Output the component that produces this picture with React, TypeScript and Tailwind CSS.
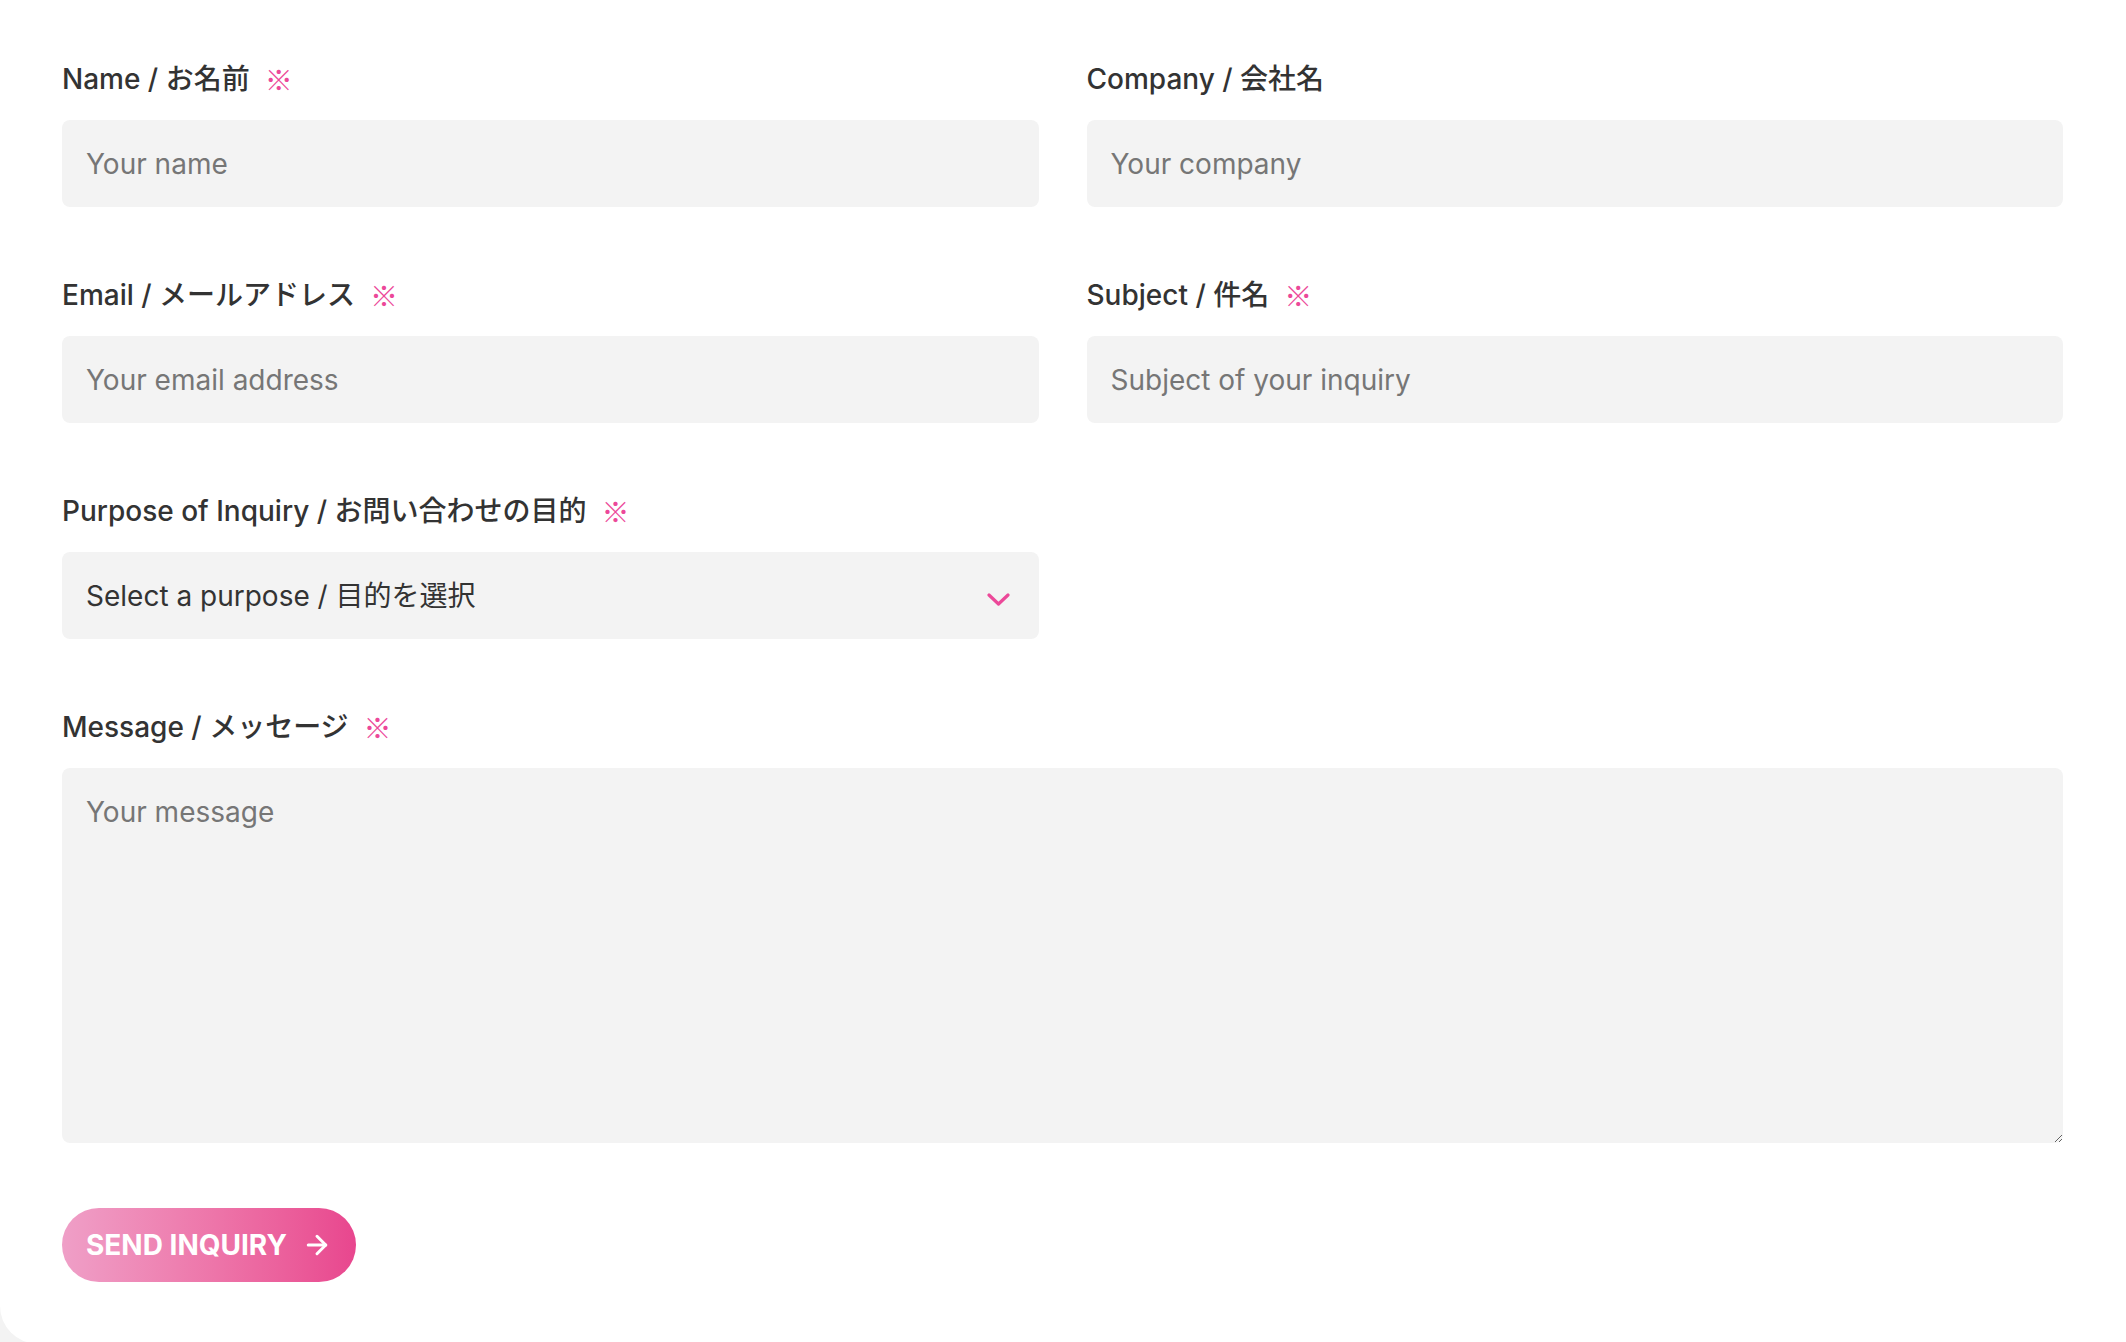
import React from 'react';
import { ArrowRight } from 'lucide-react';

const font = { fontFamily: 'Inter, "Noto Sans CJK JP", sans-serif' };

const Label: React.FC<{ text: string; required?: boolean }> = ({ text, required }) => (
  <label className="flex items-center h-[40px] text-[28px] leading-[40px] font-medium text-[#333333] mb-[21px]">
    <span>{text}</span>
    {required && (
      <span
        className="ml-[15px] text-[#ec4899] text-[28px] font-normal"
        style={{ fontFamily: '"Noto Sans CJK JP", sans-serif' }}
      >
        ※
      </span>
    )}
  </label>
);

const inputCls =
  'w-full h-[87px] rounded-[8px] bg-[#f3f3f3] px-6 text-[28px] text-[#333333] placeholder:text-[#767676] outline-none';

export default function App() {
  return (
    <div className="min-h-screen bg-[#f3f3f3]" style={font}>
      <form className="bg-white rounded-bl-[38px] pt-[59px] pb-[62px] pl-[62px] pr-[63px]">
        <div className="grid grid-cols-2 gap-x-[48px] gap-y-[68px]">
          <div>
            <Label text="Name / お名前" required />
            <input className={inputCls} placeholder="Your name" />
          </div>
          <div>
            <Label text="Company / 会社名" />
            <input className={inputCls} placeholder="Your company" />
          </div>
          <div>
            <Label text="Email / メールアドレス" required />
            <input className={inputCls} placeholder="Your email address" />
          </div>
          <div>
            <Label text="Subject / 件名" required />
            <input className={inputCls} placeholder="Subject of your inquiry" />
          </div>
          <div>
            <Label text="Purpose of Inquiry / お問い合わせの目的" required />
            <div className="relative">
              <select className={`${inputCls} appearance-none`} defaultValue="">
                <option value="">Select a purpose / 目的を選択</option>
              </select>
              <svg
                className="absolute right-[29px] top-[41px] pointer-events-none"
                width="23"
                height="14"
                viewBox="0 0 23 14"
                fill="none"
                stroke="#ec4899"
                strokeWidth="3.2"
                strokeLinecap="round"
                strokeLinejoin="round"
              >
                <polyline points="2,2 11.5,11 21,2" />
              </svg>
            </div>
          </div>
          <div />
          <div className="col-span-2">
            <Label text="Message / メッセージ" required />
            <textarea
              className="block w-full h-[375px] rounded-[8px] bg-[#f3f3f3] px-6 pt-[23px] pb-5 text-[28px] leading-[1.5] text-[#333333] placeholder:text-[#767676] outline-none resize-y"
              placeholder="Your message"
            />
          </div>
        </div>
        <button
          type="button"
          className="mt-[65px] h-[74px] flex items-center gap-[15px] px-6 rounded-full bg-gradient-to-r from-[#ef9fc7] to-[#e8468e] text-white text-[28px] font-bold"
        >
          SEND INQUIRY
          <ArrowRight size={30} strokeWidth={2.4} />
        </button>
      </form>
    </div>
  );
}
